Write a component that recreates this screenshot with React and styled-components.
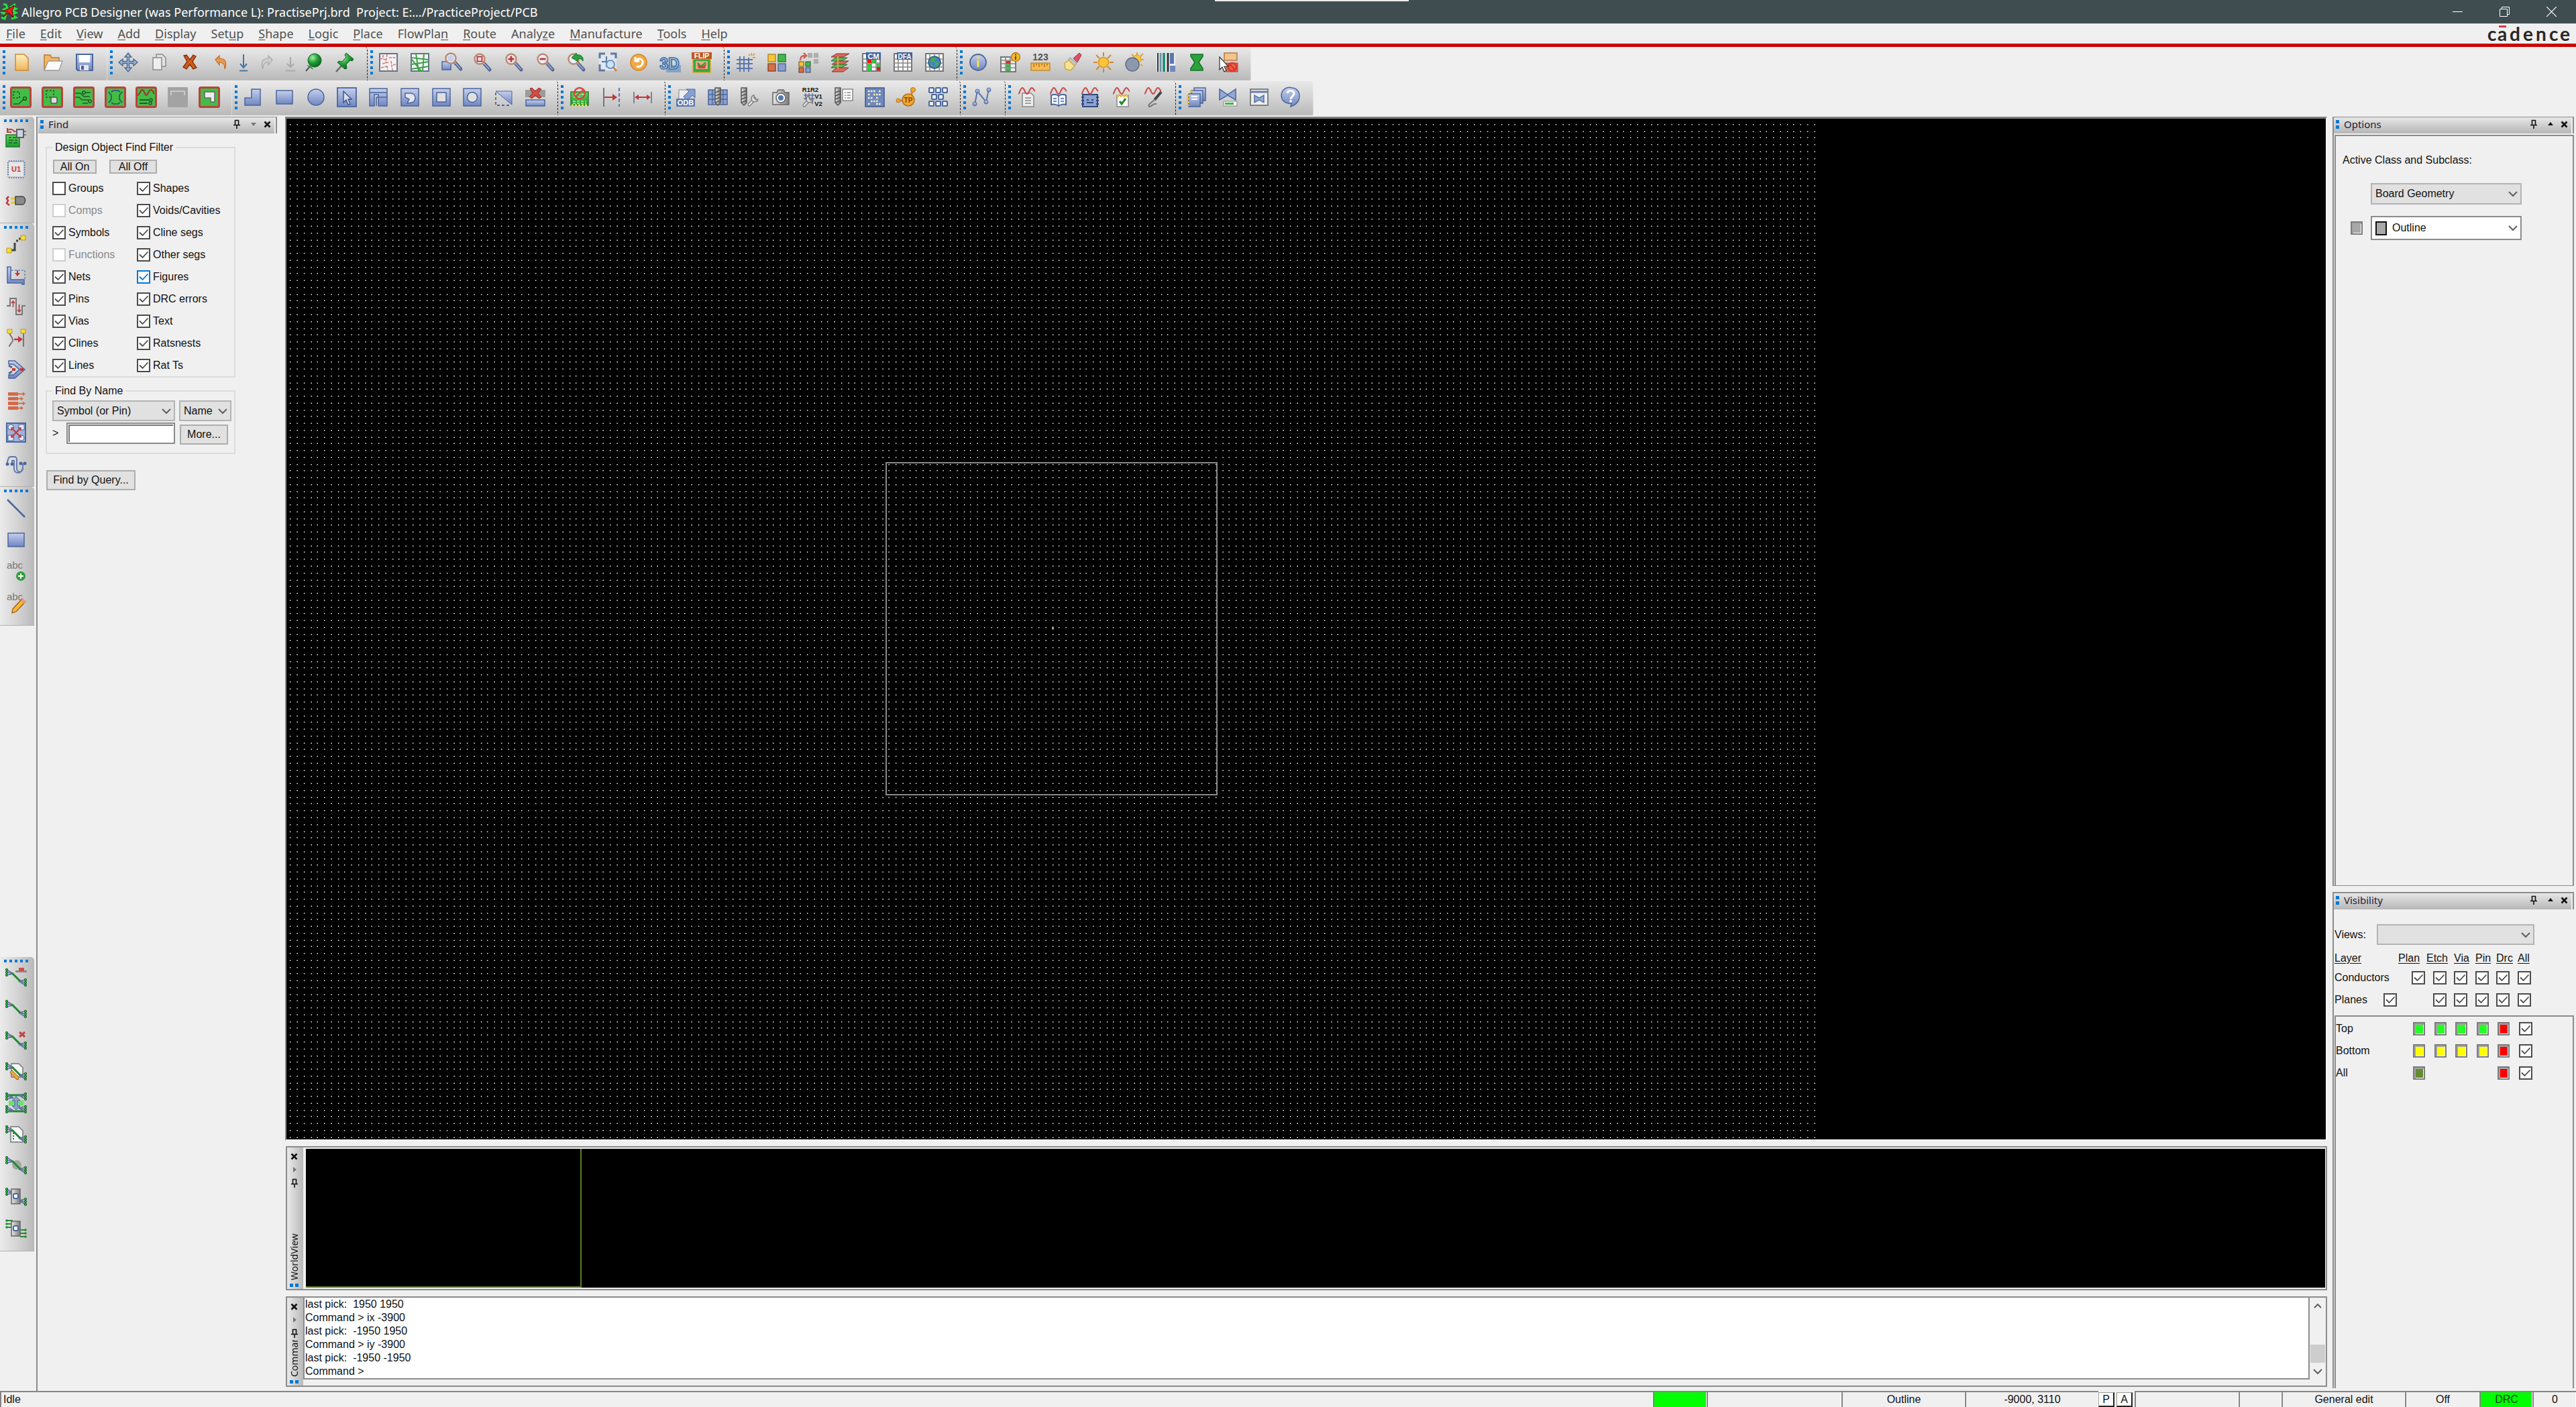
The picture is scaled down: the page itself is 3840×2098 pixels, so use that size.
import React from "react";
import styled, { createGlobalStyle } from "styled-components";

const face = "#f0f0f0";
const edge = "#8c8c8c";
const sans = '"Liberation Sans", Arial, sans-serif';
const humanist = '"Noto Sans", "Open Sans", sans-serif';

const GlobalStyle = createGlobalStyle`
  * { box-sizing: border-box; }
  body { margin: 0; background: ${face}; }
  button, input, select { font: inherit; color: inherit; margin: 0; }
  svg { display: block; flex: none; }
`;

const Shell = styled.div`
  display: flex;
  flex-direction: column;
  height: 100vh;
  overflow: hidden;
  background: ${face};
  color: #111;
  font: 16px/20px ${sans};
`;

/* ---------- title and menus ---------- */

const TitleBar = styled.header`
  position: relative;
  display: flex;
  align-items: center;
  height: 35px;
  flex: none;
  padding: 0 2px 0 1px;
  gap: 5px;
  background: #404d50;
  color: #fff;
  font: 18px/24px ${humanist};
  white-space: pre;
`;
const TopTab = styled.span`
  position: absolute;
  top: 0;
  left: 1811px;
  width: 289px;
  height: 2px;
  background: #ececec;
`;
const WindowTitle = styled.h1`
  flex: 1;
  margin: 0;
  font: inherit;
`;
const WindowButtons = styled.div`
  display: flex;
`;
const WindowButton = styled.button`
  display: grid;
  place-items: center;
  width: 70px;
  height: 35px;
  padding: 0;
  border: 0;
  background: none;
`;

const MenuBar = styled.nav`
  display: flex;
  align-items: center;
  height: 35px;
  flex: none;
  padding: 0 4px 0 9px;
  gap: 22px;
  border-bottom: 5px solid #cc0000;
  font: 18px/24px ${humanist};
`;
const MenuItem = styled.button`
  padding: 0;
  border: 0;
  background: none;
  color: #505050;
  u { text-underline-offset: 2px; }
`;
const Brand = styled.svg`
  margin-left: auto;
`;

/* ---------- toolbars ---------- */

const ToolRow = styled.div`
  display: flex;
  height: ${(p) => p.$height}px;
  flex: none;
  padding-bottom: 1px;
`;
const HToolbar = styled.div`
  display: flex;
  align-items: center;
  width: ${(p) => p.$width}px;
  padding: 0 10px 4px 4px;
  border-right: 1px ${(p) => (p.$soft ? "dotted #f4f4f4" : "dashed #222")};
  border-radius: 4px 4px 0 0;
  background: linear-gradient(#e9e9e9, #d2d2d2 50%, #b9b9b9);
`;
const VToolbar = styled.div`
  display: flex;
  flex-direction: column;
  align-items: center;
  width: 51px;
  height: ${(p) => p.$height}px;
  padding: 4px 4px 10px 0;
  border-bottom: 1px solid #b0b0b0;
  border-radius: 0 5px 0 0;
  background: linear-gradient(90deg, #ebebeb, #d4d4d4 50%, #b9b9b9);
`;
const Tool = styled.button`
  display: grid;
  place-items: center;
  flex: ${(p) => (p.$small ? "0 0 24px" : "1 1 0")};
  min-width: 0;
  min-height: 0;
  padding: 0;
  border: 0;
  background: none;
`;
const dots = "#0078d7";
const HHandle = styled.i`
  flex: none;
  width: 4px;
  height: 36px;
  background: repeating-linear-gradient(${dots} 0 4px, transparent 4px 8px);
`;
const VHandle = styled.i`
  flex: none;
  width: 36px;
  height: 4px;
  background: repeating-linear-gradient(90deg, ${dots} 0 4px, transparent 4px 8px);
`;

/* ---------- body ---------- */

const Body = styled.main`
  display: flex;
  flex: 1;
  min-height: 0;
  padding-top: 1px;
`;
const LeftRail = styled.aside`
  display: flex;
  flex-direction: column;
  justify-content: space-between;
  width: 54px;
  flex: none;
  padding: 0 0 208px;
`;
const FindDock = styled.section`
  width: 371px;
  flex: none;
  padding-right: 12px;
  border-left: 2px solid ${edge};
`;
const Center = styled.section`
  display: flex;
  flex-direction: column;
  flex: 1;
  min-width: 0;
  gap: 8px;
  padding: 0 8px 6px 0;
`;
const RightDock = styled.aside`
  display: flex;
  flex-direction: column;
  width: 363px;
  flex: none;
  gap: 9px;
  padding: 0 3px 4px 0;
`;

const PanelTitle = styled.h2`
  display: flex;
  align-items: center;
  height: 24px;
  margin: 0;
  padding: 0 1px 4px 3px;
  border-right: 2px solid ${face};
  background: linear-gradient(#e6e6e6, #b6b6b6);
  color: #1c1c3c;
  font: 15px/20px ${humanist};
`;
const Grip = styled.i`
  flex: none;
  width: 5px;
  height: 13px;
  margin-right: 7px;
  background: repeating-linear-gradient(${dots} 0 5px, transparent 5px 8px);
`;
const PanelName = styled.span`
  flex: 1;
`;
const PanelButton = styled.button`
  display: grid;
  place-items: center;
  width: ${(p) => p.$width || 20}px;
  height: 20px;
  padding: 0;
  border: 0;
  background: none;
`;
const FindTitleFrame = styled.div`
  border-right: 2px solid ${edge};
  border-top: 1px solid ${edge};
  padding-left: 1px;
`;

const FindBody = styled.div`
  display: flex;
  flex-direction: column;
  align-items: flex-start;
  padding: 11px 0 0 12px;
`;
const Group = styled.fieldset`
  width: 283px;
  min-width: 0;
  margin: 0;
  padding: ${(p) => p.$pad};
  border: 2px solid #dcdcdc;
`;
const Legend = styled.legend`
  padding: 0 4px;
  line-height: 20px;
`;
const FaceButton = styled.button`
  width: ${(p) => p.$width}px;
  height: ${(p) => p.$height}px;
  padding: 0;
  border: 2px solid #adadad;
  background: #e1e1e1;
  line-height: 16px;
`;
const AllButtons = styled.div`
  display: flex;
  gap: 19px;
  padding-left: 1px;
`;
const FilterGrid = styled.div`
  display: grid;
  grid-template-columns: 126px 1fr;
  grid-auto-rows: 33px;
  align-items: center;
  margin-top: 5px;
`;
const CheckLabel = styled.label`
  display: flex;
  align-items: center;
  gap: 4px;
  color: ${(p) => (p.$off ? "#8a8a8a" : "#111")};
`;
const CheckWrap = styled.span`
  display: inline-grid;
  flex: none;
  vertical-align: top;
  > * { grid-area: 1 / 1; }
  svg { pointer-events: none; }
`;
const CheckInput = styled.input`
  appearance: none;
  width: 20px;
  height: 20px;
  border: 2px solid ${(p) => (p.$tone === "off" ? "#cfcfcf" : p.$tone === "hot" ? "#0078d7" : "#4c4c4c")};
  background: #fff;
`;

const NameRow = styled.div`
  display: flex;
  align-items: ${(p) => (p.$top ? "flex-start" : "center")};
  gap: 6px;
  height: ${(p) => p.$height}px;
`;
const Prompt = styled.label`
  width: 15px;
  line-height: 36px;
`;
const TextBox = styled.input`
  width: 162px;
  height: 32px;
  margin-top: 2px;
  border: 2px solid #8a8a8a;
  background: #fff;
  box-shadow: inset 0 0 0 1px #fff, inset 2px 2px 0 1px #777;
`;
const MoreSpot = styled.div`
  padding: 5px 0 0 1px;
`;
const QuerySpot = styled.div`
  padding: 24px 0 0 1px;
`;

const SelectWrap = styled.span`
  display: inline-grid;
  width: ${(p) => p.$width}px;
  height: ${(p) => p.$height}px;
  > * { grid-area: 1 / 1; }
  > svg { place-self: center end; margin-right: 6px; pointer-events: none; }
`;
const SelectBox = styled.select`
  appearance: none;
  width: 100%;
  height: 100%;
  padding: 0 0 0 ${(p) => p.$indent || 5}px;
  border: 2px solid ${(p) => (p.$white ? "#8c8c8c" : "#b4b4b4")};
  border-radius: 0;
  background: ${(p) => (p.$white ? "#fff" : "#e1e1e1")};
`;

/* ---------- design canvas, world view, command ---------- */

const Canvas = styled.div`
  flex: 1;
  min-height: 0;
  border: 2px solid #fff;
  border-left-color: #8a8a8a;
  border-top: 3px solid #7c7c7c;
  background: #000;
  overflow: hidden;
`;
const DockRow = styled.section`
  display: flex;
  height: ${(p) => p.$height}px;
  flex: none;
  margin-left: 1px;
  margin-top: ${(p) => p.$gap || 0}px;
  border: 2px solid ${edge};
`;
const SideTitle = styled.h2`
  display: flex;
  flex-direction: column;
  align-items: center;
  width: 24px;
  flex: none;
  margin: 0;
  padding: 3px 3px 3px 0;
  background: linear-gradient(90deg, #e9e9e9, #b9b9b9);
  font: 14px/20px ${humanist};
`;
const SideName = styled.span`
  flex: 1 1 0;
  min-height: 0;
  overflow: hidden;
  writing-mode: vertical-rl;
  transform: rotate(180deg);
  white-space: nowrap;
`;
const SideGrip = styled.i`
  flex: none;
  width: 13px;
  height: 5px;
  margin-top: 5px;
  background: repeating-linear-gradient(90deg, ${dots} 0 5px, transparent 5px 8px);
`;
const World = styled.div`
  flex: 1;
  margin: 2px 1px 2px 4px;
  background: #000;
`;
const WorldExtent = styled.div`
  width: 411px;
  height: 100%;
  border-right: 2px solid #5c7d2a;
  border-bottom: 2px solid #5c7d2a;
`;
const Log = styled.pre`
  flex: 1;
  margin: 0 0 9px;
  padding: 0 1px;
  border: 2px solid ${edge};
  border-top: 0;
  background: #fff;
  font: 16px/20px ${sans};
`;
const Scroll = styled.div`
  display: flex;
  flex-direction: column;
  align-items: center;
  width: 24px;
  padding: 5px 0 14px;
`;
const ScrollThumb = styled.i`
  width: 22px;
  height: 27px;
  margin-top: auto;
  margin-bottom: 6px;
  background: #cdcdcd;
`;

/* ---------- right dock ---------- */

const Dock = styled.section`
  display: flex;
  flex-direction: column;
  flex: ${(p) => p.$height ? `0 0 ${p.$height}px` : "1 1 0"};
  min-height: 0;
  border-left: 2px solid ${edge};
  border-top: ${(p) => (p.$lid ? 2 : 1)}px solid ${edge};
  border-bottom: ${(p) => (p.$lid ? 0 : 1)}px solid ${edge};
  ${PanelTitle} { box-shadow: 2px 0 0 ${edge}; margin-right: 2px; }
`;
const Sunken = styled.div`
  flex: 1;
  margin-left: 1px;
  border: 2px solid ${edge};
  border-bottom: 0;
`;
const OptionsBody = styled(Sunken)`
  margin-top: 2px;
  padding: 26px 0 0 10px;
`;
const ClassRow = styled.div`
  display: flex;
  align-items: center;
  gap: 12px;
  margin-top: ${(p) => p.$gap}px;
  padding-left: ${(p) => p.$indent}px;
`;
const Swatch = styled.button`
  width: 18px;
  height: 20px;
  padding: 0;
  vertical-align: top;
  border: 2px solid #7d7d7d;
  background: ${(p) => p.$color};
  box-shadow: inset 2px 2px 0 #a3a3a3, inset -1px -1px 0 #fff;
`;
const SubclassChip = styled.i`
  place-self: center start;
  width: 17px;
  height: 21px;
  margin-left: 7px;
  border: 2px solid #111;
  background: #a8a8a8;
  pointer-events: none;
`;
const ViewsRow = styled.div`
  display: flex;
  align-items: center;
  padding: 22px 0 8px 1px;
`;
const ViewsLabel = styled.label`
  width: 63px;
`;
const LayerTable = styled.table`
  width: 304px;
  margin-left: 1px;
  table-layout: fixed;
  border-collapse: collapse;
  th, td { padding: 0; text-align: left; font-weight: normal; white-space: nowrap; height: 33px; }
  thead th { text-decoration: underline; height: 24px; text-underline-offset: 2px; }
`;
const LayerList = styled(Sunken)`
  margin-top: 7px;
  padding-top: 1px;
  ${LayerTable} { margin-left: 0; }
`;

/* ---------- status ---------- */

const StatusBar = styled.footer`
  display: flex;
  height: 24px;
  flex: none;
  line-height: 20px;
`;
const Cell = styled.span`
  flex: ${(p) => (p.$width ? `0 0 ${p.$width}px` : "1 1 0")};
  padding: ${(p) => (p.$width ? "1px 0 0" : "1px 0 0 3px")};
  border-top: 2px solid #858585;
  border-left: 2px solid #858585;
  text-align: ${(p) => (p.$width ? "center" : "left")};
  background: ${(p) => (p.$green ? "#00ff00" : face)};
  color: ${(p) => (p.$green ? "#003c10" : "#111")};
  box-shadow: inset -1px 0 0 #fff;
  white-space: nowrap;
  overflow: hidden;
`;
const StatusButton = styled.button`
  width: 24px;
  height: 22px;
  margin: 2px 3px 0 0;
  padding: 0;
  border: 1px solid #999;
  border-right: 2px solid #222;
  border-bottom: 2px solid #222;
  background: #fff;
  line-height: 18px;
`;

/* ---------- icons ---------- */

const B = "#4a669c";
const BL = "url(#blue)";
const GR = "url(#green)";
const RE = "#c1393b";
const st = (c, w = 2) => ({ fill: "none", stroke: c, strokeWidth: w });

const HiddenDefs = styled.svg`
  position: absolute;
`;
const Defs = () => (
  <HiddenDefs width="0" height="0" aria-hidden="true">
    <defs>
      <linearGradient id="blue" x1="0" y1="0" x2="0" y2="1"><stop offset="0" stopColor="#c6cfec" /><stop offset="1" stopColor="#6f86c0" /></linearGradient>
      <linearGradient id="green" x1="0" y1="0" x2="0" y2="1"><stop offset="0" stopColor="#5fd35a" /><stop offset="1" stopColor="#1c9a2c" /></linearGradient>
      <linearGradient id="amber" x1="0" y1="0" x2="0" y2="1"><stop offset="0" stopColor="#fff0c0" /><stop offset="1" stopColor="#eeb45a" /></linearGradient>
      <linearGradient id="steel" x1="0" y1="0" x2="1" y2="0"><stop offset="0" stopColor="#e8e8e8" /><stop offset="1" stopColor="#7c7c7c" /></linearGradient>
      <radialGradient id="ball" cx=".35" cy=".3" r=".8"><stop offset="0" stopColor="#a6eea0" /><stop offset=".5" stopColor="#1f9a34" /><stop offset="1" stopColor="#0b5c1b" /></radialGradient>
    </defs>
  </HiddenDefs>
);

const Lens = ({ children }) => (
  <>
    <path d="M18 17l9 10" stroke="#55658f" strokeWidth="5" strokeLinecap="round" />
    <path d="M18.500 17.500l8 9" stroke="#9fb1dc" strokeWidth="1.500" />
    <path d="M16 15l3 3" stroke="#e09a3c" strokeWidth="3.500" />
    <circle cx="12" cy="11" r="7.500" fill="#e9eef8" stroke="#b98a73" strokeWidth="2.400" />
    {children}
  </>
);
const Board = ({ children, frame = "#b8433d" }) => (
  <>
    <rect x="1.500" y="1.500" width="29" height="29" rx="2" fill="#43bd45" stroke={frame} strokeWidth="3" />
    {children}
  </>
);
const Wave = () => <path d="M3 11c2 0 3-9 6-9s4 9 7 9 4-9 7-9 3 4 5 5" {...st("#c9484a", 2)} />;
const TableGrid = ({ children }) => (
  <>
    <rect x="3" y="3" width="26" height="26" fill="#fff" stroke="#777" strokeWidth="2" />
    <path d="M3 11h26M3 17h26M3 23h26M9 3v26M16 3v26M23 3v26" {...st("#888", 1.6)} />
    {children}
  </>
);
const Fan = ({ side, y }) => {
  const x = side === "l" ? 2 : 30;
  const t = side === "l" ? 12 : 20;
  return (
    <g>
      {[-4, 0, 4].map((d) => (
        <g key={d}>
          <path d={`M${x} ${y + d}L${t} ${y + (side === "l" ? 2 : -2)}`} {...st("#5a6fa0", 1.6)} />
          <circle cx={x} cy={y + d} r="1.700" fill="#36a84a" stroke="#176b28" strokeWidth="1" />
        </g>
      ))}
    </g>
  );
};
const Flow = ({ under, children }) => (
  <>
    {under}
    <Fan side="l" y={8} />
    <Fan side="r" y={23} />
    <path d="M10 9l12 12" stroke="#1f8a2f" strokeWidth="3" />
    {children}
  </>
);
const Drill = ({ x = 0 }) => (
  <g transform={`translate(${x} 0)`}>
    <path d="M4 2h8v22l-4 4-4-4z" fill="url(#steel)" stroke="#555" strokeWidth="1.500" />
    <path d="M4 9l8-3M4 14l8-3M4 19l8-3M4 24l8-3" {...st("#555", 1.5)} />
  </g>
);
const Wrench = ({ x = 0, y = 0 }) => (
  <g transform={`translate(${x} ${y})`}>
    <path d="M2 16L10 7" stroke="#777" strokeWidth="5" strokeLinecap="round" />
    <path d="M2 16L10 7" stroke="#e8e8e8" strokeWidth="2.500" strokeLinecap="round" />
    <path d="M9 2a5 5 0 1 0 6 6l-3 1-3-3z" fill="#ddd" stroke="#777" strokeWidth="1.300" />
  </g>
);
const T = ({ x, y, s, c = "#fff", children, w = "bold" }) => (
  <text x={x} y={y} fontSize={s} fontWeight={w} fill={c} textAnchor="middle" fontFamily="Liberation Sans, Arial, sans-serif">{children}</text>
);

const glyphs = {
  newFile: <path d="M7 4h13l6 6v18H7z" fill="url(#amber)" stroke="#c98a35" strokeWidth="1.500" />,
  open: <><path d="M3 27V5h9l2 4h11v6" fill="#f3b765" stroke="#c07a2a" strokeWidth="1.500" /><path d="M3 28l6-14h21l-5 14z" fill="#fafafa" stroke="#999" strokeWidth="1.300" /></>,
  save: <><path d="M4 4h24v24H6l-2-2z" fill={BL} stroke={B} strokeWidth="2" /><path d="M8 5h16v11H8z" fill="#fff" /><path d="M9 20h13v8H9z" fill="#e6e6e6" /><path d="M11 21h4v6h-4z" fill="#4a5f96" /></>,
  move: <path d="M16 2l5 6h-3.500v6.500H24V11l6 5-6 5v-3.500h-6.500V24H21l-5 6-5-6h3.500v-6.500H8V21l-6-5 6-5v3.500h6.500V8H11z" fill="#9cb2d4" stroke="#47688f" strokeWidth="1.300" />,
  copy: <><path d="M12 4h9l5 5v13H12z" fill="#e3e3e3" stroke="#8b8b8b" strokeWidth="1.500" /><path d="M7 9h13v18H7z" fill="#eee" stroke="#8b8b8b" strokeWidth="1.500" /></>,
  del: <path d="M7 6l4-1 5 7 5-7 4 2-5 8 6 9-5 2-5-7-5 7-5-3 6-8z" fill="#cf5b1c" stroke="#7a2c06" strokeWidth="1.300" />,
  undo: <path d="M8 12l6-6v4c9 0 12 6 8 16 0-7-2-10-8-10v4z" fill="#e79a52" stroke="#c06d26" strokeWidth="1.200" />,
  redo: <path d="M24 12l-6-6v4c-9 0-12 6-8 16 0-7 2-10 8-10v4z" fill="#ccc" stroke="#a9a9a9" strokeWidth="1.200" />,
  step: <><path d="M16 4v19M11 18l5 6 5-6" {...st("#4a74a4", 2)} /><path d="M10 28.500h12" {...st("#4a74a4", 2)} /></>,
  stepOff: <><path d="M16 8v15M11 18l5 5 5-5" {...st("#a9a9a9", 2)} /><path d="M9 28.500h14" {...st("#a9a9a9", 2)} /></>,
  ballPin: <><path d="M10 22l-6 7" {...st("#555", 2)} /><path d="M5 20c4 0 9 3 10 7z" fill="#1d8a30" /><circle cx="17" cy="13" r="10" fill="url(#ball)" stroke="#0c661d" /></>,
  pushPin: <><path d="M12 20L3 30" {...st("#666", 2.500)} /><path d="M18 2l11 9-2 3-3-1-6 6 1 6-3 1L5 16l2-2 5 1 6-7-2-3z" fill="url(#ball)" stroke="#0c661d" /></>,
  unrats: <><rect x="3" y="3" width="26" height="26" fill="#f6f0f0" stroke="#64748f" strokeWidth="2" /><path d="M3 10l9 2M14 4l-2 13M17 9h12M7 18l9-2M20 14l2 14M5 24l9-2M14 21l1 8M23 20l6-2M8 5v6" {...st("#c2817f", 1.6)} strokeDasharray="4 1.500" /></>,
  rats: <><rect x="3" y="3" width="26" height="26" fill="#f3f8f3" stroke="#64748f" strokeWidth="2" /><path d="M3 9l26 3M3 19l26-4M3 26l26-4M10 3l4 26M22 3l-2 26M4 12l14 17" {...st("#3f9e4b", 2)} /></>,
  zoomRect: <><rect x="2" y="15" width="13" height="12" fill={BL} stroke={B} strokeWidth="1.500" /><g transform="translate(3 -1)"><Lens><circle cx="12" cy="11" r="5" fill="#c6d0ec" /></Lens></g></>,
  zoomFit: <Lens><rect x="8.500" y="7.500" width="7" height="7" {...st(RE, 2)} /></Lens>,
  zoomIn: <Lens><path d="M12 6.500v9M7.500 11h9" {...st(RE, 2.8)} /></Lens>,
  zoomOut: <Lens><path d="M7.500 11h9" {...st(RE, 2.8)} /></Lens>,
  zoomPrev: <Lens><path d="M9 9l7-7 1 3c7-1 10 4 9 9-2-3-4-4-8-3l1 4z" fill="#2aa33a" stroke="#14702a" /></Lens>,
  zoomSel: <><rect x="3" y="2" width="26" height="26" fill="#dfe6ee" /><path d="M4 10V3h8M20 3h8v7M4 19v9h8" {...st("#5f7a9c", 3)} /><path d="M7 15h14M14 7v16" {...st("#5f7a9c", 2)} /><path d="M24 23l5 6" {...st("#d18a3a", 3)} /><circle cx="20" cy="19" r="6" fill="#cfe3f7" stroke="#6a96c4" strokeWidth="2" /></>,
  refresh: <><circle cx="16" cy="16" r="12" fill="#f2a945" stroke="#d48523" strokeWidth="1.500" /><path d="M11 8v6h6M12 13c5-5 11-1 10 4s-6 6-9 5" {...st("#fff", 3)} /></>,
  threeD: <><path d="M10 20h22v11H10z" fill="#6f93bf" opacity=".7" /><text x="15" y="26" fontSize="23" fontWeight="bold" textAnchor="middle" fill="#a9c4e4" stroke="#3e73a8" strokeWidth="1.600" fontFamily="Liberation Sans, Arial, sans-serif">3D</text></>,
  flip: <><rect x="3" y="11" width="26" height="20" fill="#36a83a" stroke="#d6a63a" strokeWidth="1.500" /><rect x="7" y="14" width="18" height="12" fill="#e9a886" /><path d="M9 16c2 6 8 8 14 1l-2 8H11z" fill="#cf4a3a" /><path d="M10 17l5 5 7-6" {...st("#2a9a33", 2)} /><rect x="1" y="1" width="30" height="10" fill="#bd5a1e" /><T x={16} y={10} s={10.500}>FLIP</T></>,
  grid: <><path d="M3 12h24M3 18h24M3 25h24M8 7v23M14 7v23M21 9v21" {...st("#5c76ad", 2)} /><path d="M25 2v4M30 3l-3 3M31 9h-4M21 4l2 2" {...st("#e5a043", 1.8)} /></>,
  color: <><rect x="3" y="4" width="11" height="11" fill="#f8c533" stroke="#b98a2a" strokeWidth="1.500" /><rect x="18" y="4" width="11" height="11" fill="#45b84a" stroke="#2a7d35" strokeWidth="1.500" /><rect x="3" y="18" width="11" height="11" fill="#d3704d" stroke="#96462a" strokeWidth="1.500" /><rect x="18" y="18" width="11" height="11" fill="#8a9dce" stroke="#566a9c" strokeWidth="1.500" /></>,
  colorSwap: <><path d="M15 2h7v7h-7zM24 2h7v7h-7zM24 11h7v7h-7z" fill="#adadad" /><path d="M4 13c0-6 3-7 7-7M9 2l4 4-4 4" {...st("#cf5a50", 2.4)} /><rect x="2" y="15" width="7" height="7" fill="#f8c533" stroke="#665522" /><rect x="12" y="15" width="7" height="7" fill="#45b84a" stroke="#225522" /><rect x="2" y="24" width="7" height="7" fill="#d3704d" stroke="#663322" /><rect x="12" y="24" width="7" height="7" fill="#8a9dce" stroke="#334466" /></>,
  layers: <><path d="M11 3h19l-9 5H3z" fill="#d96a5c" stroke="#8a3028" /><path d="M9 9h18l-8 5H3z" fill="#56b85e" stroke="#256b2d" /><path d="M11 14h18l-8 5H4z" fill="#d96a5c" stroke="#8a3028" /><path d="M9 19h18l-8 5H3z" fill="#56b85e" stroke="#256b2d" /><path d="M11 24h18l-8 6H4z" fill="#d96a5c" stroke="#8a3028" /><path d="M13 7v18" {...st("#d5a83c", 2.500)} /></>,
  cm: <TableGrid><path d="M10 12h6v5h-6zM24 23h5v5h-5z" fill="#f11" /><path d="M10 18h6v5h-6zM17 12h6v5h-6zM24 18h5v5h-5zM10 24h6v5h-6z" fill="#39c04a" /><rect x="8" y="1" width="22" height="11" fill="#41629c" /><T x={19} y={11} s={11}>CM</T></TableGrid>,
  dfa: <TableGrid><rect x="7" y="1" width="23" height="11" fill="#41629c" /><T x={18.500} y={10.500} s={10}>DFA</T></TableGrid>,
  globe: <TableGrid><circle cx="16" cy="16" r="9" fill="#4a83bf" stroke="#2c5080" strokeWidth="1.500" /><path d="M10 10l6-2 2 4-4 4-4-2zM17 15l6 1-3 7-3-2zM10 18l4 3-2 2z" fill="#3fae50" /></TableGrid>,
  info: <><circle cx="16" cy="16" r="12" fill={BL} stroke={B} strokeWidth="1.800" /><path d="M16 13v10" stroke="#f5e04a" strokeWidth="3" /><circle cx="16" cy="9" r="1.900" fill="#f5e04a" /></>,
  tableInfo: <><rect x="3" y="8" width="22" height="22" fill="#eee" stroke="#777" strokeWidth="2" /><path d="M3 13h22M3 18h22M3 24h22M10 8v22M17 8v22" {...st("#888", 1.600)} /><path d="M11 14h6v4h-6z" fill="#e22" /><path d="M11 19h6v5h-6zM11 25h6v4h-6z" fill="#3ab54a" /><circle cx="25" cy="8" r="6.500" fill="#f2b52c" stroke="#b07f16" strokeWidth="1.300" /><path d="M25 7v5M25 3.500v2" stroke="#6b4a00" strokeWidth="2" /></>,
  ruler: <><T x={16} y={13} s={14} c="#555">123</T><rect x="2" y="17" width="28" height="11" fill="#f6bb50" stroke="#c08424" strokeWidth="1.300" /><path d="M6 18v5M10 18v3M14 18v5M18 18v3M22 18v5M26 18v3" {...st("#b4751a", 1.500)} /></>,
  brush: <><path d="M18 10l9-8 3 3-6 11z" fill="#d85466" stroke="#9a3040" /><path d="M13 9l10 8-3 4-10-8z" fill="#c8c8c8" stroke="#888" /><path d="M11 13l9 8-6 7-8-2-1-9z" fill="#f7e38c" stroke="#c9a73a" strokeWidth="1.300" /></>,
  sun: <><path d="M16 1v6M16 25v6M1 16h6M25 16h6M5 5l5 5M22 22l5 5M27 5l-5 5M10 22l-5 5" {...st("#cf8a32", 2)} /><circle cx="16" cy="16" r="7.500" fill="#fbc43a" stroke="#db9420" strokeWidth="1.500" /></>,
  shadow: <><path d="M20 1v4M30 12h-4M29 3l-4 4M12 4l3 3M28 21l-3-2" {...st("#e5a12c", 2)} /><circle cx="20" cy="11" r="6" fill="#fbc43a" stroke="#db9420" /><circle cx="13" cy="19" r="10" fill="#8c98ae" stroke="#5d6c88" strokeWidth="1.500" /></>,
  bars: <><rect x="2" y="2" width="28" height="28" fill="#eee" /><path d="M4 2v28" {...st("#333", 2)} /><path d="M8 2v28" {...st("#6c8fae", 3)} /><path d="M13 2v28" {...st("#2d8f7a", 4)} /><path d="M19 2v28" {...st("#333", 3)} /><path d="M25 2v16" {...st("#5c76ad", 6)} /><path d="M22 21h8v9h-8z" fill="#6f86c0" /></>,
  hourglass: <path d="M7 4h18v3l-6 9 6 9v3H7v-3l6-9-6-9z" fill="#2aa33a" stroke="#14702a" strokeWidth="1.500" />,
  unpick: <><rect x="10" y="2" width="19" height="11" fill="#f1c38d" stroke="#b97b45" strokeWidth="1.500" /><rect x="13" y="17" width="17" height="13" fill="#d9724e" stroke="#9c4a2e" /><circle cx="22" cy="23" r="6" {...st("#e8302c", 2.500)} /><path d="M18 19l8 8" {...st("#e8302c", 2.500)} /><path d="M3 8v19l4-4 3 7 3-2-3-6h6z" fill="#fff" stroke="#333" strokeWidth="1.200" /></>,
  mGeneral: <Board><path d="M5 8h9v9H5z" {...st("#245a2c", 1.500)} strokeDasharray="3 2" /><path d="M5 26h8l6-6h4" {...st("#245a2c", 1.500)} /><circle cx="22" cy="18" r="2.500" {...st("#245a2c", 1.500)} /></Board>,
  mPlace: <Board><path d="M7 6h11v10H7z" {...st("#245a2c", 1.500)} strokeDasharray="3 2" /><rect x="14" y="16" width="9" height="9" rx="2" fill="#ddd" stroke="#555" strokeWidth="1.500" /></Board>,
  mEtch: <Board><path d="M3 10h8l5 5h9M3 16h6l4 4h10M18 9h8M14 25h8" {...st("#245a2c", 1.500)} /><circle cx="16" cy="9" r="2.200" {...st("#245a2c", 1.500)} /><circle cx="25" cy="22" r="2.200" {...st("#245a2c", 1.500)} /></Board>,
  mFlow: <Board><path d="M10 8l3-2h7l3 2M10 24l3 2h7l3-2M6 8l4 5v6l-4 5M26 8l-4 5v6l4 5" {...st("#2c4f7a", 1.600)} /></Board>,
  mSignal: <Board><path d="M3 13c3 0 4-8 7-8s4 8 6 8 4-8 7-8 4 5 5 6" {...st("#a03030", 2)} /><path d="M6 20h14M6 25h12" {...st("#245a2c", 1.800)} /><circle cx="23" cy="20" r="2" {...st("#245a2c", 1.500)} /><circle cx="22" cy="25" r="2" {...st("#245a2c", 1.500)} /></Board>,
  mOff: <><rect x="1" y="1" width="30" height="30" rx="1" fill="#a3a3a3" /><path d="M6 13V7h20v6" {...st("#c9c9c9", 2)} /></>,
  mShape: <Board><path d="M9 8h15v15h-6v-6H9z" fill="#ededed" stroke="#666" strokeWidth="1.500" /></Board>,
  polygon: <path d="M14 4h13v24H4V17h10z" fill={BL} stroke={B} strokeWidth="1.500" />,
  rect: <rect x="4" y="6" width="24" height="20" fill={BL} stroke={B} strokeWidth="1.500" />,
  circle: <circle cx="16" cy="16" r="12" fill={BL} stroke={B} strokeWidth="1.500" />,
  select: <><rect x="2" y="2" width="28" height="28" fill={BL} stroke={B} strokeWidth="1.800" /><path d="M11 7v17l4-4 3 7 3-1-3-7h5z" fill="#d8dff2" stroke="#33497c" strokeWidth="1.300" /></>,
  boundary: <><path d="M3 3h26v26H16V12H10v17H3z" fill={BL} stroke={B} strokeWidth="1.500" /><path d="M3 9h26M13 29V16h16" {...st(B, 1.500)} /></>,
  voidPoly: <><rect x="3" y="3" width="26" height="26" fill={BL} stroke={B} strokeWidth="1.500" /><path d="M9 10h9c8 1 8 13 0 14l-6 1 3-6-6-3z" fill="#e4e7f1" stroke={B} strokeWidth="1.500" /></>,
  voidRect: <><rect x="3" y="3" width="26" height="26" fill={BL} stroke={B} strokeWidth="1.500" /><rect x="9" y="9" width="14" height="14" fill="#e0e0e0" stroke={B} strokeWidth="1.500" /></>,
  voidCirc: <><rect x="3" y="3" width="26" height="26" fill={BL} stroke={B} strokeWidth="1.500" /><circle cx="16" cy="16" r="7.500" fill="#e0e0e0" stroke={B} strokeWidth="1.500" /></>,
  voidDel: <><path d="M4 7h24v20z" fill={BL} stroke={B} strokeWidth="1" /><path d="M4 9v19h22" {...st(B, 1.800)} strokeDasharray="4 3" /></>,
  islandDel: <><rect x="1" y="5" width="30" height="11" fill="#9c9c9c" /><rect x="2" y="20" width="28" height="9" fill={BL} stroke={B} strokeWidth="1.500" /><path d="M8 3l3-1 5 5 5-5 4 2-5 6 5 6-4 2-5-5-5 5-4-3 5-5z" fill="#d34c42" stroke="#9c2b25" /></>,
  film: <><rect x="3" y="8" width="26" height="20" fill={GR} stroke="#2a7a2c" strokeWidth="1.500" /><path d="M4 28h24" stroke="#f2e04a" strokeWidth="3" strokeDasharray="3 2" /><path d="M6 22h20M6 25h20M7 12h18M7 16h18" {...st("#b6f0a8", 1.500)} strokeDasharray="4 2" /><circle cx="16" cy="10" r="8" {...st("#d8463f", 2.500)} /><path d="M11 15L21 5" {...st("#d8463f", 2)} /></>,
  dimOne: <><path d="M5 2v28" {...st("#777", 2)} /><path d="M28 2v28" {...st("#5c76ad", 2)} strokeDasharray="5 3" /><path d="M6 16h14" {...st(RE, 2)} /><path d="M18 11l7 5-7 5z" fill={RE} /></>,
  dimTwo: <><path d="M3 8v17M29 8v17" {...st("#7a869e", 2)} /><path d="M8 16h16" {...st(RE, 2)} /><path d="M10 12l-6 4 6 4zM22 12l6 4-6 4z" fill={RE} /></>,
  odb: <><rect x="5" y="5" width="16" height="14" fill="#eee" stroke="#888" /><path d="M12 15l8-8-4-3h13v13l-4-4-8 8z" fill="#86a0cf" stroke={B} /><rect x="1" y="18" width="28" height="12" rx="1" fill="#5b77b0" /><T x={15} y={28} s={11}>ODB</T></>,
  drillTable: <><rect x="2" y="5" width="28" height="22" fill="#8da3d1" stroke={B} strokeWidth="1.500" /><path d="M2 12h28M2 19h28M8 5v22M24 5v22" {...st("#4a669c", 1.300)} /><Drill x={8} /></>,
  drillParam: <><Drill x={0} /><Wrench x={14} y={11} /></>,
  camera: <><path d="M4 9h6l2-4h8l2 4h6v18H4z" fill="url(#steel)" stroke="#666" strokeWidth="1.500" /><circle cx="16" cy="17" r="7" fill="#fff" stroke="#666" strokeWidth="1.500" /><circle cx="16" cy="17" r="4" fill="#5278ac" /></>,
  rename: <><T x={13} y={8} s={9.500} c="#111">R1R2</T><T x={25} y={18} s={9.500} c="#111">V1</T><T x={25} y={29} s={9.500} c="#111">V2</T><path d="M6 10v10M11 10v10M16 10v16M3 13h16M3 18h16" {...st("#5c76ad", 1.600)} /><Wrench x={2} y={12} /></>,
  drillLegend: <><Drill x={0} /><rect x="15" y="4" width="15" height="17" fill="#fff" stroke="#888" strokeWidth="1.500" /><path d="M18 9h9M18 13h9M18 17h9" {...st("#888", 1.500)} strokeDasharray="2 1.500 6 0" /></>,
  dotBoard: <><rect x="2" y="2" width="28" height="28" fill="#6f88bd" stroke="#3c5790" strokeWidth="1.500" /><path d="M6 7h12M22 7h4M6 12h4M14 12h12M6 17h8M18 17h4M10 22h12M6 26h4M18 26h8" {...st("#fbf0bc", 2.600)} strokeDasharray="2.600 1.400" /></>,
  testPoint: <><path d="M5 21h10l9-9V6" {...st("#d88a22", 3)} /><circle cx="26" cy="5" r="3.500" fill="#f2a62e" stroke="#b3701a" /><circle cx="4" cy="21" r="3" fill="#f2a62e" stroke="#b3701a" /><circle cx="19" cy="20" r="9" fill="#f2a62e" stroke="#b3701a" strokeWidth="1.500" /><T x={19} y={24} s={10} c="#7a4406">TP</T></>,
  stacks: <>{[3, 13, 23].map((x) => [2, 12, 22].map((y) => (y === 12 && x === 23 ? null : <rect key={`${x}-${y}`} x={y === 12 ? x + 4 : x} y={y} width="7" height="7" rx="1" fill="#e9eefb" stroke="#4a669c" strokeWidth="2" />)))}</>,
  nets: <><path d="M5 26L9 7l13 16 4-19" {...st("#5c76ad", 2)} /><circle cx="5" cy="26" r="3" fill={BL} stroke={B} /><circle cx="9" cy="7" r="3" fill={BL} stroke={B} /><circle cx="22" cy="23" r="3" fill={BL} stroke={B} /><circle cx="26" cy="5" r="3" fill={BL} stroke={B} /></>,
  sigFile: <><path d="M9 10h13l4 4v16H9z" fill="#eee" stroke="#888" strokeWidth="1.500" /><path d="M13 17h9M13 21h9M13 25h9" {...st("#888", 1.500)} /><Wave /></>,
  sigBook: <><path d="M5 13c4-2 9-1 11 1 2-2 7-3 11-1v14c-4-1-9 0-11 2-2-2-7-3-11-2z" fill="#f4f6fb" stroke={B} strokeWidth="2" /><path d="M16 14v15M8 18h5M19 18h5M8 22h5M19 22h5" {...st(B, 1.300)} /><Wave /></>,
  sigChip: <><rect x="5" y="12" width="22" height="18" fill="#8ba2d3" stroke="#33497c" strokeWidth="2" /><path d="M3 16h4M3 21h4M3 26h4M25 16h4M25 21h4M25 26h4" {...st("#33497c", 2)} /><path d="M11 24h10M11 20h3M18 20h3" {...st("#33497c", 2)} /><Wave /></>,
  sigCheck: <><rect x="9" y="13" width="17" height="17" fill="#fff" stroke="#888" strokeWidth="1.500" /><path d="M9 14h17" stroke="#f2bd3a" strokeWidth="4" strokeDasharray="3 1.500" /><path d="M13 22l3 4 6-8" {...st("#238a31", 3)} /><Wave /></>,
  sigProbe: <><path d="M28 8L18 20" {...st("#444", 4)} /><path d="M19 19l-6 5c-4 3-5 6-2 6s5-6 10-4" {...st("#777", 2)} /><Wave /></>,
  reports: <><rect x="12" y="2" width="17" height="19" fill={BL} stroke={B} strokeWidth="1.500" /><rect x="8" y="6" width="17" height="19" fill={BL} stroke={B} strokeWidth="1.500" /><rect x="4" y="11" width="17" height="19" fill={BL} stroke={B} strokeWidth="1.500" /><path d="M8 15h9M8 19h9" {...st("#fff", 2)} /><path d="M3 12v17M8 6v4" stroke="#efb93a" strokeWidth="4" strokeDasharray="3 2" /></>,
  valve: <><path d="M3 4v16l12-7 12 7V4l-12 8z" fill="#93a8d6" stroke={B} strokeWidth="1.500" /><rect x="9" y="22" width="20" height="7" fill="#f4f4f4" stroke="#888" /><rect x="11" y="24" width="13" height="3" fill="#3cb84c" /></>,
  valveWin: <><rect x="3" y="4" width="26" height="24" fill="#eee" stroke="#777" strokeWidth="1.800" /><path d="M3 8h26" {...st("#6b7fae", 3)} /><path d="M9 13v11l7-4 7 4V13l-7 4z" fill="#93a8d6" stroke={B} strokeWidth="1.300" /></>,
  help: <><path d="M18 2a12 12 0 1 0-1 23l-1 5c9-3 13-9 13-16 0-7-5-12-11-12z" fill={BL} stroke={B} strokeWidth="1.500" /><path d="M11 10c1-5 10-5 10 1 0 3-5 4-5 8" {...st("#fff", 3)} /><circle cx="16" cy="22" r="1.900" fill="#fff" /></>,
  placeManual: <><path d="M14 8C11 3 7 3 4 5M3 2v6h6" {...st(RE, 2)} /><rect x="1" y="12" width="20" height="18" fill={GR} stroke="#1f7a2c" strokeWidth="1.500" /><path d="M5 16h4M11 16h6M5 20h7M14 20h4M5 24h5M12 24h6" {...st("#14602a", 1.600)} /><rect x="17" y="4" width="10" height="12" fill="#ccd4e4" stroke="#555" strokeWidth="1.800" /><path d="M14 7h3M14 12h3M27 7h4M27 12h4" {...st("#666", 1.600)} /></>,
  refdes: <><rect x="4" y="5" width="24" height="23" fill="#e6e6e6" stroke="#aaa" /><path d="M5 4h22M5 29h22" stroke="#5c76ad" strokeWidth="2" strokeDasharray="1.500 2" /><path d="M4 6v21M28.500 6v21" stroke="#5c76ad" strokeWidth="2" strokeDasharray="1.500 2" /><T x={16} y={20} s={11} c={RE}>U1</T></>,
  plug: <><path d="M5 10l-3 3 2 3-2 4 4 3" {...st(RE, 2.500)} /><path d="M8 13h8M8 19h8" {...st("#e6cc2e", 3.500)} /><path d="M15 10h10c6 0 6 12 0 12H15z" fill="#8b8b8b" stroke="#444" strokeWidth="1.500" /></>,
  connect: <><path d="M6 25h8V14" {...st("#444", 3)} /><path d="M16 11h3M20 8h3" {...st("#444", 3)} /><path d="M2 22h7v7H2zM23 3h7v7h-7z" fill="#f6dc38" stroke="#b59a20" /></>,
  slide: <><path d="M3 3h5v19h20v7h-3v-2H3z" fill={BL} stroke={B} strokeWidth="1.500" /><path d="M9 8h20v13" {...st("#6c86ba", 1.600)} strokeDasharray="3 2" /><path d="M17 8v4h-3l4 5 4-5h-3V8z" fill={RE} /></>,
  delay: <><path d="M2 14h5V3h9v24h9V14h5" {...st("#777", 2)} /><path d="M11.500 16V8M9 10l2.500-3 2.500 3M20.500 12v11M18 20l2.500 3 2.500-3" {...st(RE, 1.600)} /></>,
  custom: <><path d="M6 6c0 6 5 7 5 12s-5 5-5 10M27 6v22" {...st("#777", 2)} /><path d="M3 2h7v6H3zM23 2h7v6h-7z" fill="#f6dc38" stroke="#b59a20" /><path d="M13 17h8" {...st(RE, 2.500)} /><path d="M19 12l7 5-7 5z" fill={RE} /></>,
  glossing: <><path d="M5 3h9l15 13-15 13H5v-5h7l9-8-9-8H5z" fill={BL} stroke={B} strokeWidth="1.500" /><path d="M5 10l5 3M5 22l5-3" {...st(B, 3)} /><path d="M10 16h5M22 16h5" {...st(RE, 4)} /></>,
  fanout: <>{[4, 11, 18, 25].map((y, i) => <g key={y}><rect x="4" y={y - 1} width="15" height="5" fill="#d36a4b" /><path d={`M19 ${y + 1.5}h${i % 2 ? 6 : 9}`} {...st("#d36a4b", 1.8)} /><path d={`M${i % 2 ? 23 : 26} ${y - 1.500}l4 3-4 3z`} fill="#d36a4b" /></g>)}</>,
  spread: <><rect x="2" y="2" width="28" height="28" fill="#9fb1dc" stroke={B} strokeWidth="2" /><circle cx="8" cy="8" r="4" fill="#e6eaf6" stroke={B} /><rect x="20" y="4" width="8" height="8" fill="#e6eaf6" stroke={B} /><rect x="4" y="20" width="8" height="8" fill="#e6eaf6" stroke={B} /><circle cx="24" cy="24" r="4" fill="#e6eaf6" stroke={B} /><path d="M10 10l12 12M22 10L10 22" {...st(RE, 2)} /><path d="M9 13V9h4M19 9h4v4M23 19v4h-4M13 23H9v-4" {...st(RE, 1.600)} /></>,
  snake: <><path d="M3 15c0-3 1-10 5-10h5c4 0 4 3 4 6v12c0 6 9 6 9 0v-8M10 15v-4h3v12c0 8 12 8 12 0" {...st("#5c76ad", 1.800)} /><circle cx="3" cy="16" r="2.500" fill={B} /><circle cx="10" cy="16" r="2.500" fill={B} /><circle cx="23" cy="15" r="2.500" fill={B} /><circle cx="29" cy="15" r="2.500" fill={B} /></>,
  line: <path d="M3 3l26 26" {...st("#4a669c", 2.500)} />,
  textAdd: <><T x={14} y={12} s={15} c="#777" w="normal">abc</T><circle cx="23" cy="23" r="7" fill="#2f9e3c" /><path d="M23 19v8M19 23h8" {...st("#fff", 2)} /></>,
  textEdit: <><T x={14} y={12} s={15} c="#777" w="normal">abc</T><path d="M11 25L25 10l5 4-14 15-6 2z" fill="#f4bb2e" stroke="#a5561c" strokeWidth="1.300" /><path d="M23 12l5 5 3-3-5-5z" fill="#e39a84" /></>,
  fpCreate: <Flow><path d="M15 5h17v3H15z" fill="#8a8a8a" /><path d="M20 1h8v5h-8z" fill="#c9504c" /></Flow>,
  fpPlain: <Flow />,
  fpDelete: <Flow><path d="M21 3l8 7M29 3l-8 7" {...st("#c9443e", 3)} /></Flow>,
  fpEdit: <Flow under={<path d="M9 4h11l6 6v14H9z" fill="#f6f6f6" stroke="#777" strokeWidth="1.500" />}><path d="M7 17l3-3 10 10-1 4-3-1z" fill="#f0a83a" stroke="#9c5a1c" /></Flow>,
  fpExpand: <><path d="M4 4h24M4 28h24" {...st("#1f8a2f", 3)} /><path d="M5 12h8l3 2 3-2h8v8h-8l-3-2-3 2H5z" fill="#6fe070" /><Fan side="l" y={6} /><Fan side="r" y={6} /><Fan side="l" y={25} /><Fan side="r" y={25} /><path d="M16 6l6 6h-4v8h4l-6 6-6-6h4v-8h-4z" fill="#8ba2d3" stroke={B} /></>,
  fpDoc: <Flow under={<path d="M8 4h12l6 6v17H8z" fill="#f6f6f6" stroke="#777" strokeWidth="1.500" />}><path d="M12 13v11" {...st("#1f8a2f", 2)} strokeDasharray="2 2" /></Flow>,
  fpVia: <Flow under={<circle cx="17" cy="15" r="7" fill="#a5a5a5" />} />,
  fpChip: <><Fan side="l" y={8} /><Fan side="r" y={23} /><rect x="9" y="4" width="13" height="22" fill="url(#steel)" stroke="#666" strokeWidth="1.500" /><rect x="12" y="11" width="7" height="7" rx="2" fill="#fff" stroke="#4a669c" strokeWidth="2" /></>,
  fpChipPins: <>{[4, 9, 14].map((y) => <g key={y}><path d={`M2 ${y}h9M22 ${y + 14}h8`} {...st("#2a8a3a", 2)} /><circle cx="2" cy={y} r="1.800" fill="#1f8a2f" /><circle cx="30" cy={y + 14} r="1.800" fill="#1f8a2f" /></g>)}<rect x="9" y="5" width="13" height="22" fill="url(#steel)" stroke="#666" strokeWidth="1.500" /><rect x="12" y="12" width="7" height="7" rx="2" fill="#fff" stroke="#4a669c" strokeWidth="2" /></>,
};

const Glyph = ({ name }) => (
  <svg width={name.startsWith("step") ? 24 : 32} height="32" viewBox={name.startsWith("step") ? "4 0 24 32" : "0 0 32 32"} fill="none" aria-hidden="true">
    {glyphs[name]}
  </svg>
);

const PinIcon = () => (
  <svg width="12" height="14" viewBox="0 0 12 14" aria-hidden="true"><path d="M3.500 1v7M8.500 1v7M3 1.500h6M1 8.500h10M6 9v5" fill="none" stroke="#111" strokeWidth="1.600" /></svg>
);
const TriIcon = ({ up, right }) => (
  <svg width="10" height="10" viewBox="0 0 10 10" aria-hidden="true">
    <path d={up ? "M1 7l4-5 4 5z" : right ? "M3 1l5 4-5 4z" : "M1 3l4 5 4-5z"} fill={up ? "#111" : "#777"} />
  </svg>
);
const CloseIcon = () => (
  <svg width="11" height="11" viewBox="0 0 11 11" aria-hidden="true"><path d="M1.500 1.500l8 8M9.500 1.500l-8 8" stroke="#111" strokeWidth="2.600" /></svg>
);
const Chevron = ({ up }) => (
  <svg width="14" height="14" viewBox="0 0 14 14" aria-hidden="true"><path d={up ? "M2 10l5-5 5 5" : "M1 4l6 6 6-6"} fill="none" stroke="#606060" strokeWidth="2" /></svg>
);

/* ---------- composed parts ---------- */

const row1 = [
  { w: 160, soft: true, items: ["newFile", "open", "save"] },
  { w: 388, items: ["move", "copy", "del", "undo", "step", "redo", "stepOff", "ballPin", "pushPin"] },
  { w: 532, items: ["unrats", "rats", "zoomRect", "zoomFit", "zoomIn", "zoomOut", "zoomPrev", "zoomSel", "refresh", "threeD", "flip"] },
  { w: 347, items: ["grid", "color", "colorSwap", "layers", "cm", "dfa", "globe"] },
  { w: 438, soft: true, items: ["info", "tableInfo", "ruler", "brush", "sun", "shadow", "bars", "hourglass", "unpick"] },
];
const row2 = [
  { w: 346, soft: true, items: ["mGeneral", "mPlace", "mEtch", "mFlow", "mSignal", "mOff", "mShape"] },
  { w: 486, items: ["polygon", "rect", "circle", "select", "boundary", "voidPoly", "voidRect", "voidCirc", "voidDel", "islandDel"] },
  { w: 160, items: ["film", "dimOne", "dimTwo"] },
  { w: 440, items: ["odb", "drillTable", "drillParam", "camera", "rename", "drillLegend", "dotBoard", "testPoint", "stacks"] },
  { w: 67, items: ["nets"] },
  { w: 254, items: ["sigFile", "sigBook", "sigChip", "sigCheck", "sigProbe"] },
  { w: 205, soft: true, items: ["reports", "valve", "valveWin", "help"] },
];
const railTop = [
  { h: 159, items: ["placeManual", "refdes", "plug"] },
  { h: 393, items: ["connect", "slide", "delay", "custom", "glossing", "fanout", "spread", "snake"] },
  { h: 207, items: ["line", "rect", "textAdd", "textEdit"] },
];
const railBottom = { h: 439, items: ["fpCreate", "fpPlain", "fpDelete", "fpEdit", "fpExpand", "fpDoc", "fpVia", "fpChip", "fpChipPins"] };

const Tools = ({ items }) => items.map((n) => (
  <Tool key={n} type="button" aria-label={n} $small={n.startsWith("step")}><Glyph name={n} /></Tool>
));
const ToolStrip = ({ bars, height }) => (
  <ToolRow $height={height}>
    {bars.map((b, i) => (
      <HToolbar key={i} $width={b.w} $soft={b.soft}><HHandle /><Tools items={b.items} /></HToolbar>
    ))}
  </ToolRow>
);
const RailBar = ({ bar }) => (
  <VToolbar $height={bar.h}><VHandle /><Tools items={bar.items} /></VToolbar>
);

const Check = ({ on = true, tone, id, label }) => (
  <CheckWrap>
    <CheckInput type="checkbox" id={id} aria-label={label} defaultChecked={on} disabled={tone === "off"} $tone={tone} />
    {on && (
      <svg width="20" height="20" viewBox="0 0 20 20" aria-hidden="true">
        <path d="M4 9.500l4.500 4.500L16.500 5.500" fill="none" stroke={tone === "hot" ? "#0078d7" : "#4c4c4c"} strokeWidth="1.800" />
      </svg>
    )}
  </CheckWrap>
);

const Drop = ({ width, height, label, children, white, indent, chip }) => (
  <SelectWrap $width={width} $height={height}>
    <SelectBox aria-label={label} id={label} $white={white} $indent={indent}>{children}</SelectBox>
    {chip}
    <Chevron />
  </SelectWrap>
);

const Title = ({ name, down }) => (
  <PanelTitle>
    <Grip />
    <PanelName>{name}</PanelName>
    <PanelButton type="button" aria-label={`Pin ${name}`} $width={30}><PinIcon /></PanelButton>
    <PanelButton type="button" aria-label={`Roll ${name}`}><TriIcon up={!down} /></PanelButton>
    <PanelButton type="button" aria-label={`Close ${name}`}><CloseIcon /></PanelButton>
  </PanelTitle>
);
const Side = ({ name }) => (
  <SideTitle>
    <PanelButton type="button" aria-label={`Close ${name}`}><CloseIcon /></PanelButton>
    <PanelButton type="button" aria-label={`Roll ${name}`}><TriIcon right /></PanelButton>
    <PanelButton type="button" aria-label={`Pin ${name}`}><PinIcon /></PanelButton>
    <SideName>{name}</SideName>
    <SideGrip />
  </SideTitle>
);

const filters = [
  ["Groups", false, null], ["Shapes", true, null],
  ["Comps", false, "off"], ["Voids/Cavities", true, null],
  ["Symbols", true, null], ["Cline segs", true, null],
  ["Functions", false, "off"], ["Other segs", true, null],
  ["Nets", true, null], ["Figures", true, "hot"],
  ["Pins", true, null], ["DRC errors", true, null],
  ["Vias", true, null], ["Text", true, null],
  ["Clines", true, null], ["Ratsnests", true, null],
  ["Lines", true, null], ["Rat Ts", true, null],
];

const FindPanel = () => (
  <FindDock>
    <FindTitleFrame><Title name="Find" down /></FindTitleFrame>
    <FindBody>
      <Group $pad="8px 0 0 8px">
        <Legend>Design Object Find Filter</Legend>
        <AllButtons>
          <FaceButton type="button" $width={65} $height={21}>All On</FaceButton>
          <FaceButton type="button" $width={71} $height={21}>All Off</FaceButton>
        </AllButtons>
        <FilterGrid>
          {filters.map(([name, on, tone]) => (
            <CheckLabel key={name} $off={tone === "off"}>
              <Check on={on} tone={tone} />
              {name}
            </CheckLabel>
          ))}
        </FilterGrid>
      </Group>
      <FindByName />
      <QuerySpot><FaceButton type="button" $width={133} $height={30}>Find by Query...</FaceButton></QuerySpot>
    </FindBody>
  </FindDock>
);

const NameGroup = styled(Group)`
  margin-top: 10px;
  height: 104px;
`;
const FindByName = () => (
  <NameGroup $pad="4px 0 0 8px">
    <Legend>Find By Name</Legend>
    <NameRow $height={31}>
      <Drop width={183} height={31} label="Find kind"><option>Symbol (or Pin)</option></Drop>
      <Drop width={78} height={31} label="Find mode"><option>Name</option></Drop>
    </NameRow>
    <NameRow $top $height={38}>
      <Prompt htmlFor="find-name">&gt;</Prompt>
      <TextBox id="find-name" type="text" />
      <MoreSpot><FaceButton type="button" $width={72} $height={30}>More...</FaceButton></MoreSpot>
    </NameRow>
  </NameGroup>
);

/* Grid points land on whole steps of 1.5px, spaced about 6.76 steps apart. */
const columns = Array.from({ length: 225 }, (_, k) => 4.9 + 1.5 * Math.floor(k * 6.761 + 0.8));
const rows = Array.from({ length: 150 }, (_, k) => 7.9 + 1.5 * Math.floor(k * 6.757 + 0.3));

const DesignView = () => (
  <Canvas>
    <svg width="100%" height="100%" role="img" aria-label="Board design">
      <mask id="rows" maskUnits="userSpaceOnUse" x="0" y="0" width="2400" height="1540">
        <path d={rows.map((y) => `M0 ${y}h2400v1.500H0z`).join("")} fill="#fff" />
      </mask>
      <path d={columns.map((x) => `M${x} 0v1540h1.500V0z`).join("")} fill="#f0f0f0" mask="url(#rows)" />
      <rect x="894" y="513" width="493" height="495" fill="none" stroke="#8a8a8a" strokeWidth="2" />
      <ellipse cx="1142.500" cy="759.500" rx="1.500" ry="2.500" fill="#9cc46a" />
    </svg>
  </Canvas>
);

const log = `last pick:  1950 1950
Command > ix -3900
last pick:  -1950 1950
Command > iy -3900
last pick:  -1950 -1950
Command >`;

const heads = ["Via", "Pin", "Drc", "All"];
const LayerCols = () => (
  <colgroup>
    {[73, 22, 20, 22, 10, 31, 32, 31, 32, 31].map((w, i) => <col key={i} width={w} />)}
  </colgroup>
);
const green = "#24ff24";
const layers = [
  ["Top", [green, green, green, green, "#ff0000"]],
  ["Bottom", ["#ffff00", "#ffff00", "#ffff00", "#ffff00", "#ff0000"]],
  ["All", ["#638c33", null, null, null, "#ff0000"]],
];

const VisibilityPanel = () => (
  <Dock $lid>
    <Title name="Visibility" />
    <ViewsRow>
      <ViewsLabel htmlFor="Views">Views:</ViewsLabel>
      <Drop width={235} height={31} label="Views"><option></option></Drop>
    </ViewsRow>
    <LayerTable>
      <LayerCols />
      <thead>
        <tr>
          <th>Layer</th><th></th><th colSpan={2}>Plan</th><th colSpan={2}>Etch</th>
          {heads.map((h) => <th key={h}>{h}</th>)}
        </tr>
      </thead>
      <tbody>
        {["Conductors", "Planes"].map((name) => (
          <tr key={name}>
            <th scope="row">{name}</th>
            <td colSpan={2}>{name === "Planes" && <Check label="Planes" />}</td>
            <td colSpan={2}>{name === "Conductors" && <Check label="Conductors Plan" />}</td>
            {["Etch", ...heads].map((h) => <td key={h}><Check label={`${name} ${h}`} /></td>)}
          </tr>
        ))}
      </tbody>
    </LayerTable>
    <LayerList>
      <LayerTable>
        <LayerCols />
        <tbody>
          {layers.map(([name, colors]) => (
            <tr key={name}>
              <th scope="row">{name}</th>
              <td colSpan={2}></td>
              {colors.map((c, i) => (
                <td key={i} colSpan={i === 0 ? 2 : 1}>{c && <Swatch type="button" aria-label={`${name} colour`} $color={c} />}</td>
              ))}
              <td><Check label={`${name} visible`} /></td>
            </tr>
          ))}
        </tbody>
      </LayerTable>
    </LayerList>
  </Dock>
);

const OptionsPanel = () => (
  <Dock $height={1147}>
    <Title name="Options" />
    <OptionsBody>
      Active Class and Subclass:
      <ClassRow $gap={24} $indent={42}>
        <Drop width={225} height={32} label="Active class"><option>Board Geometry</option></Drop>
      </ClassRow>
      <ClassRow $gap={17} $indent={12}>
        <Swatch type="button" aria-label="Subclass colour" $color="#a8a8a8" />
        <Drop width={225} height={36} label="Active subclass" white indent={30} chip={<SubclassChip />}><option>Outline</option></Drop>
      </ClassRow>
    </OptionsBody>
  </Dock>
);

const menus = [
  ["", "F", "ile"], ["", "E", "dit"], ["", "V", "iew"], ["", "A", "dd"], ["", "D", "isplay"],
  ["Set", "u", "p"], ["", "S", "hape"], ["", "L", "ogic"], ["", "P", "lace"], ["FlowPla", "n", ""],
  ["", "R", "oute"], ["Analy", "z", "e"], ["", "M", "anufacture"], ["", "T", "ools"], ["", "H", "elp"],
];

export default function App() {
  return (
    <Shell>
      <GlobalStyle />
      <Defs />
      <TitleBar>
        <TopTab />
        <svg width="26" height="26" viewBox="0 0 26 26" aria-hidden="true">
          <path d="M4 1l4 1 2 5-5 2 5 3-8 2 6 3-2 6-5-2M22 1l-6 4 7 3-6 3 6 3-6 3 6 4-7 2" fill="none" stroke="#27e03a" strokeWidth="3" />
          <path d="M3 12l9-4 8-5-3 9 2 9-7-7-8 6 6-8z" fill="#f21c1c" stroke="#6a0000" />
        </svg>
        <WindowTitle>{"Allegro PCB Designer (was Performance L): PractisePrj.brd  Project: E:.../PracticeProject/PCB"}</WindowTitle>
        <WindowButtons>
          <WindowButton type="button" aria-label="Minimize"><svg width="15" height="15"><path d="M0 7.500h15" stroke="#fff" /></svg></WindowButton>
          <WindowButton type="button" aria-label="Restore"><svg width="15" height="15"><path d="M.5 3.500h11v11H.5zM3.500 3.500v-3h11v11h-3" fill="none" stroke="#fff" /></svg></WindowButton>
          <WindowButton type="button" aria-label="Close"><svg width="15" height="15"><path d="M0 0l15 15M15 0L0 15" stroke="#fff" strokeWidth="1.200" /></svg></WindowButton>
        </WindowButtons>
      </TitleBar>
      <MenuBar>
        {menus.map(([a, k, b]) => <MenuItem key={a + k + b} type="button">{a}<u>{k}</u>{b}</MenuItem>)}
        <Brand width="128" height="30" role="img" aria-label="cadence">
          <text x="0 15 33 53 72 92 108" y="26" fontSize="28" fontWeight="bold" fill="#2b2627" fontFamily="Lato, Open Sans, sans-serif">cadence</text>
          <rect x="17" y="3" width="11" height="3" fill="#e23a3f" />
        </Brand>
      </MenuBar>
      <ToolStrip bars={row1} height={51} />
      <ToolStrip bars={row2} height={52} />
      <Body>
        <LeftRail>
          <div>{railTop.map((b) => <RailBar key={b.h} bar={b} />)}</div>
          <RailBar bar={railBottom} />
        </LeftRail>
        <FindPanel />
        <Center>
          <DesignView />
          <DockRow $height={215}>
            <Side name="WorldView" />
            <World><WorldExtent /></World>
          </DockRow>
          <DockRow $height={135} $gap={1}>
            <Side name="Command" />
            <Log>{log}</Log>
            <Scroll><Chevron up /><ScrollThumb /><Chevron /></Scroll>
          </DockRow>
        </Center>
        <RightDock>
          <OptionsPanel />
          <VisibilityPanel />
        </RightDock>
      </Body>
      <StatusBar>
        <Cell>Idle</Cell>
        <Cell $width={80} $green />
        <Cell $width={201} />
        <Cell $width={184}>Outline</Cell>
        <Cell $width={199}>-9000, 3110</Cell>
        <StatusButton type="button">P</StatusButton>
        <StatusButton type="button">A</StatusButton>
        <Cell $width={155} />
        <Cell $width={64} />
        <Cell $width={184}>General edit</Cell>
        <Cell $width={111}>Off</Cell>
        <Cell $width={79} $green>DRC</Cell>
        <Cell $width={65}>0</Cell>
      </StatusBar>
    </Shell>
  );
}
